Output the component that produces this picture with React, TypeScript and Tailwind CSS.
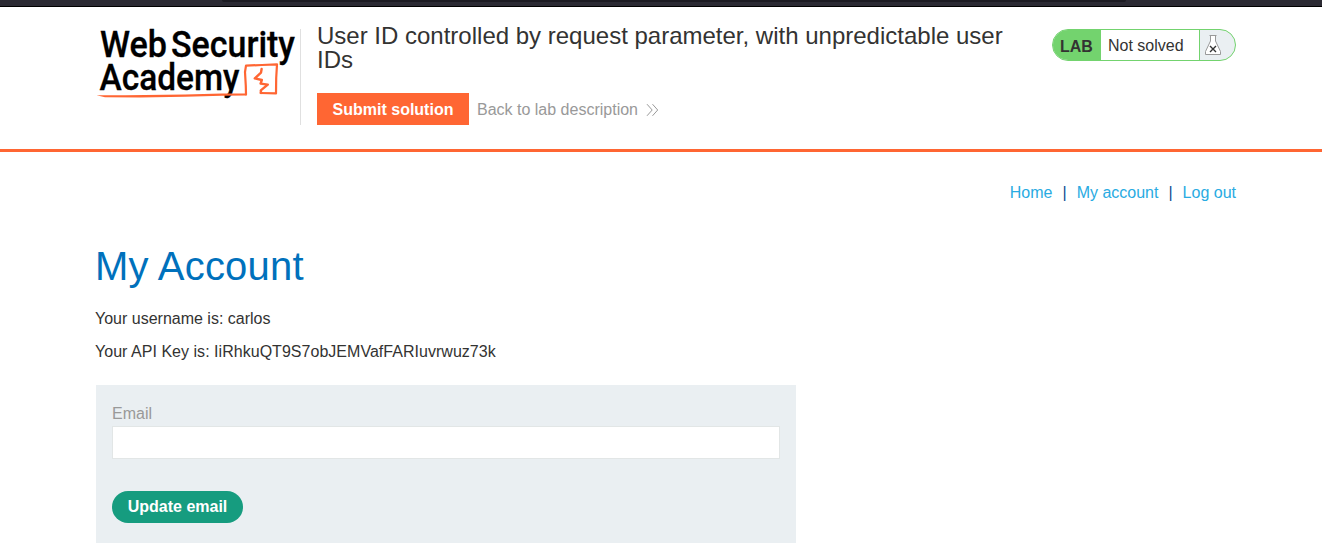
function Logo() {
  return (
    <svg
      width="204"
      height="84"
      viewBox="96 20 204 84"
      role="img"
      aria-label="Web Security Academy"
      className="-mt-1 block shrink-0 overflow-visible"
    >
      <g fill="#000" stroke="#000" strokeWidth="0.3" fontFamily="Roboto, sans-serif" fontWeight="500" fontSize="37">
        <text x="100" y="57.3" textLength="67" lengthAdjust="spacingAndGlyphs">Web</text>
        <text x="171" y="57.3" textLength="124" lengthAdjust="spacingAndGlyphs">Security</text>
        <text x="99.5" y="90" textLength="140" lengthAdjust="spacingAndGlyphs">Academy</text>
      </g>
      <g fill="none" stroke="#ff6633" strokeLinejoin="round" strokeLinecap="round">
        <path d="M246 94.4 L245.8 86 L245 72 L246 65.6 L262 65 L277 64.4 L276.2 78 L276 93.4 L260.6 93" strokeWidth="2.2" />
        <path d="M261.6 69 L261 72.6 L254.8 78.4 L261.8 80 L260.6 83.6 L267.8 84.6 L260.8 90.4 L261 93" strokeWidth="2.4" />
      </g>
      <path
        d="M96.5 95.2 L125 95.3 L185 94.6 L222 93.6 L246.5 93.6 V95.4 L222 95.8 L185 96.8 L140 97.6 L105 97.2 Z"
        fill="#ff6633"
      />
    </svg>
  );
}

function Chevrons() {
  return (
    <svg width="13" height="14" viewBox="0 0 13 14" className="-mt-px ml-2 block" fill="none" stroke="#999" strokeWidth="1">
      <path d="M1 1.2 L6.2 7 L1 12.8 M6.5 1.2 L11.7 7 L6.5 12.8" />
    </svg>
  );
}

function Flask() {
  return (
    <svg width="18" height="22" viewBox="0 0 18 22" className="block" fill="none">
      <path d="M6.5 1.5 V7 L1.5 17.5 V20.5 H16.5 V17.5 L11.5 7 V1.5 Z" fill="#fff" stroke="#999" />
      <path d="M5.5 1.5 H12.5" stroke="#999" />
      <path d="M6 12 L12 18 M12 12 L6 18" stroke="#333" strokeWidth="1.4" />
    </svg>
  );
}

function LabStatus() {
  return (
    <div className="mt-[5px] ml-auto flex h-8 w-[184px] overflow-hidden rounded-full border border-[#73d36e] bg-[#eaeff2] text-base leading-[30px]">
      <span className="w-12 shrink-0 bg-[#73d36e] pt-0.5 pl-[7px] font-bold">LAB</span>
      <span className="w-[99px] shrink-0 border-r border-[#73d36e] bg-white pt-px pl-[7px]">Not solved</span>
      <span className="flex flex-1 items-start pt-1 pl-1">
        <Flask />
      </span>
    </div>
  );
}

export default function App() {
  return (
    <div className="h-[543px] overflow-hidden bg-white font-['Liberation_Sans',Arial,sans-serif] text-base text-[#333332]">
      <div className="h-[7px] border-b border-black bg-[#2b2a33]">
        <div className="ml-[222px] h-[2px] w-[904px] rounded-b-sm bg-[#1c1b22]" />
      </div>

      <header className="h-[145px] border-b-[3px] border-[#ff6633] pt-[17px] pr-[86px] pl-[96px]">
        <div className="flex items-start">
          <Logo />
          <div className="mt-[5px] h-24 w-px shrink-0 bg-[#e0e0e0]" />
          <div className="ml-4 w-[700px] shrink-0">
            <h2 className="text-2xl leading-6">
              User ID controlled by request parameter, with unpredictable user IDs
            </h2>
            <div className="mt-[21px] flex items-center">
              <button className="h-8 w-[152px] bg-[#ff6633] pt-0.5 font-bold text-white">Submit solution</button>
              <a className="ml-2 flex items-center pt-0.5 text-[#999999]">
                Back to lab description
                <Chevrons />
              </a>
            </div>
          </div>
          <LabStatus />
        </div>
      </header>

      <main className="pr-[86px] pl-[96px]">
        <nav className="flex justify-end pt-[29px] leading-6 text-[#29abe2]">
          <a>Home</a>
          <span className="mx-[10px] text-[#0e4c92]">|</span>
          <a>My account</a>
          <span className="mx-[10px] text-[#0e4c92]">|</span>
          <a>Log out</a>
        </nav>
        <h1 className="mt-[37px] -ml-px text-[40px] leading-[48px] tracking-[0.2px] text-[#0071bc]">My Account</h1>
        <p className="mt-[17px] -ml-px leading-6">Your username is: carlos</p>
        <p className="mt-[9px] -ml-px leading-6 tracking-[0.03px]">Your API Key is: IiRhkuQT9S7obJEMVafFARIuvrwuz73k</p>
        <form className="mt-[21px] h-[180px] w-[700px] bg-[#eaeff2] px-4 pt-[17px]">
          <label className="block h-6 leading-6 text-[#999999]">Email</label>
          <input aria-label="Email" className="block h-[33px] w-full border border-[#e2e6e6] bg-white px-2 outline-none" />
          <button type="button" className="mt-8 h-8 w-[131px] rounded-full bg-[#169c7f] font-bold text-white">
            Update email
          </button>
        </form>
      </main>
    </div>
  );
}
